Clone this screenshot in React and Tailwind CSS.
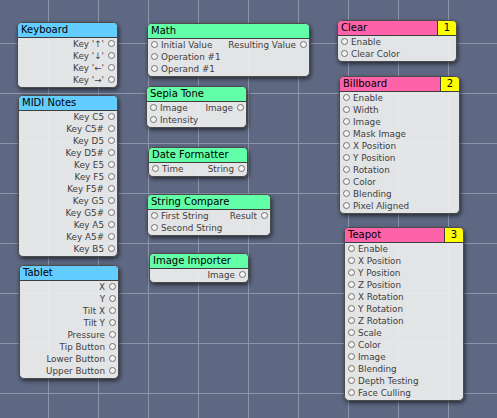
import React from "react";

const BLUE = "bg-[#62cdfe]";
const GREEN = "bg-[#62fea8]";
const PINK = "bg-[#fe62a8]";

const nodes = [
  { title: "Keyboard", pos: "left-[17px] top-[22px] w-[101px]", color: BLUE, inputs: [], outputs: ["Key '↑'", "Key '↓'", "Key '←'", "Key '→'"] },
  { title: "MIDI Notes", pos: "left-[18px] top-[95px] w-[100px]", color: BLUE, inputs: [], outputs: ["Key C5", "Key C5#", "Key D5", "Key D5#", "Key E5", "Key F5", "Key F5#", "Key G5", "Key G5#", "Key A5", "Key A5#", "Key B5"] },
  { title: "Tablet", pos: "left-[19px] top-[265px] w-[100px]", color: BLUE, inputs: [], outputs: ["X", "Y", "Tilt X", "Tilt Y", "Pressure", "Tip Button", "Lower Button", "Upper Button"] },
  { title: "Math", pos: "left-[147px] top-[23px] w-[163px]", color: GREEN, inputs: ["Initial Value", "Operation #1", "Operand #1"], outputs: ["Resulting Value"] },
  { title: "Sepia Tone", pos: "left-[146px] top-[86px] w-[101px]", color: GREEN, inputs: ["Image", "Intensity"], outputs: ["Image"] },
  { title: "Date Formatter", pos: "left-[148px] top-[147px] w-[100px]", color: GREEN, inputs: ["Time"], outputs: ["String"] },
  { title: "String Compare", pos: "left-[147px] top-[194px] w-[124px]", color: GREEN, inputs: ["First String", "Second String"], outputs: ["Result"] },
  { title: "Image Importer", pos: "left-[149px] top-[253px] w-[100px]", color: GREEN, inputs: [], outputs: ["Image"] },
  { title: "Clear", pos: "left-[337px] top-[20px] w-[120px]", color: PINK, num: 1, inputs: ["Enable", "Clear Color"], outputs: [] },
  { title: "Billboard", pos: "left-[339px] top-[76px] w-[121px]", color: PINK, num: 2, inputs: ["Enable", "Width", "Image", "Mask Image", "X Position", "Y Position", "Rotation", "Color", "Blending", "Pixel Aligned"], outputs: [] },
  { title: "Teapot", pos: "left-[344px] top-[227px] w-[120px]", color: PINK, num: 3, inputs: ["Enable", "X Position", "Y Position", "Z Position", "X Rotation", "Y Rotation", "Z Rotation", "Scale", "Color", "Image", "Blending", "Depth Testing", "Face Culling"], outputs: [] },
];

function Port() {
  return <span className="inline-block w-[7px] h-[7px] rounded-full border border-[#707070] bg-[#f4f4f4] shrink-0" />;
}

function Node({ n }) {
  const count = Math.max(n.inputs.length, n.outputs.length);
  const rows = Array.from({ length: count }, (_, i) => i);
  return (
    <div className={`absolute ${n.pos} rounded-[5px] border border-[#4c4c4c] overflow-hidden shadow-[1px_2px_4px_rgba(0,0,0,0.6)] bg-[#eeeeee]/[0.93]`}>
      <div className={`flex h-[15px] border-b border-[#3e3e3e] ${n.color}`}>
        <div className="flex-1 flex items-center pl-[3px] text-[10px] font-normal leading-none text-black">{n.title}</div>
        {n.num ? (
          <div className="w-[19px] bg-[#ffff00] border-l border-[#3e3e3e] flex items-center justify-center text-[10px] leading-none text-black">
            {n.num}
          </div>
        ) : null}
      </div>
      <div className="pb-[1px]">
        {rows.map((i) => (
          <div key={i} className="h-[12px] flex items-center justify-between pl-[3px] pr-[2px] text-[8.8px] leading-none text-[#404040]">
            <div className="flex items-center gap-[3px]">
              {n.inputs[i] ? (
                <>
                  <Port />
                  <span>{n.inputs[i]}</span>
                </>
              ) : null}
            </div>
            <div className="flex items-center gap-[4px]">
              {n.outputs[i] ? (
                <>
                  <span>{n.outputs[i]}</span>
                  <Port />
                </>
              ) : null}
            </div>
          </div>
        ))}
      </div>
    </div>
  );
}

export default function App() {
  return (
    <div className="relative w-[497px] h-[418px] overflow-hidden bg-[#5e6882] font-['DejaVu_Sans',sans-serif] bg-[linear-gradient(to_right,#8d95aa_1px,transparent_1px),linear-gradient(to_bottom,#8d95aa_1px,transparent_1px)] bg-[size:50px_50px] bg-[position:48px_43px]">
      {nodes.map((n) => (
        <Node key={n.title} n={n} />
      ))}
    </div>
  );
}
